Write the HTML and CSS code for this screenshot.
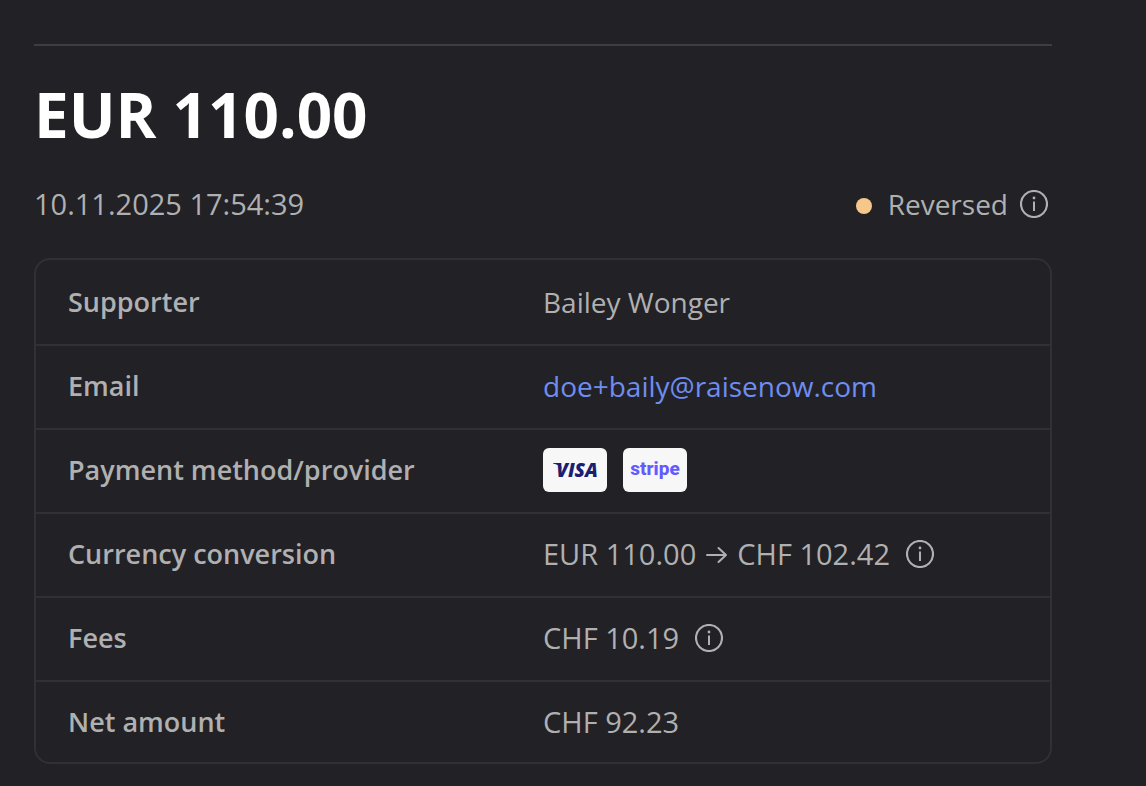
FILE: index.html
```html
<!DOCTYPE html>
<html lang="en">
<head>
<meta charset="utf-8">
<meta name="viewport" content="width=device-width, initial-scale=1">
<title>Payment details</title>
<link rel="stylesheet" href="styles.css">
</head>
<body>
<svg class="defs" aria-hidden="true">
  <symbol id="info" viewBox="0 0 28 28">
    <circle cx="14" cy="14" r="13" fill="none" stroke="currentColor" stroke-width="2.200"/>
    <path d="M14 11.500V21" fill="none" stroke="currentColor" stroke-width="2"/>
    <circle cx="14" cy="8" r="1.400" fill="currentColor"/>
  </symbol>
</svg>
<main class="payment">
  <h1 class="amount">EUR 110.00</h1>
  <div class="meta">
    <time class="date figures" datetime="2025-11-10T17:54:39">10.11.2025 17:54:39</time>
    <div class="status">
      <span class="dot"></span>
      <span>Reversed</span>
      <button class="info" type="button" aria-label="Status information"><svg><use href="#info"/></svg></button>
    </div>
  </div>
  <div class="card">
    <table class="details">
      <tbody>
        <tr><th scope="row">Supporter</th><td>Bailey Wonger</td></tr>
        <tr><th scope="row">Email</th><td><a class="link email" href="mailto:doe+baily@raisenow.com">doe+baily@raisenow.com</a></td></tr>
        <tr><th scope="row">Payment method/provider</th><td><div class="badges"><span class="badge visa"><svg class="badge-art" viewBox="0 0 64 44"><path class="visa-tick" d="M10 15h7l2 6c-2-3-5-5-9-5.500z"/><text class="visa-text" x="34" y="29" text-anchor="middle">VISA</text></svg></span><span class="badge stripe">stripe</span></div></td></tr>
        <tr><th scope="row">Currency conversion</th><td><div class="value figures"><span class="conversion">EUR 110.00 <svg class="arrow" viewBox="0 0 22 20" role="img" aria-label="to"><path d="M1 10h19M12.500 3l7.500 7-7.500 7"/></svg> CHF 102.42</span><button class="info" type="button" aria-label="Conversion information"><svg><use href="#info"/></svg></button></div></td></tr>
        <tr><th scope="row">Fees</th><td><div class="value figures"><span>CHF 10.19</span><button class="info" type="button" aria-label="Fee information"><svg><use href="#info"/></svg></button></div></td></tr>
        <tr><th scope="row">Net amount</th><td class="figures">CHF 92.23</td></tr>
      </tbody>
    </table>
  </div>
</main>
</body>
</html>
```
FILE: styles.css
```css
* { box-sizing: border-box; }
body {
  margin: 0;
  padding: 44px 94px 22px 34px;
  background: #222126;
  color: #b0b0b1;
  font-family: "Open Sans", "Noto Sans", sans-serif;
  font-size: 28px;
  line-height: 40px;
}
.defs { display: none; }
.payment { border-top: 2px solid #3e3d42; }
.amount {
  margin: 0;
  padding: 28px 0 0;
  color: #fff;
  font-size: 62px;
  font-weight: 700;
  line-height: 80px;
}
.figures { font-size: 29px; }
.meta {
  display: flex;
  justify-content: space-between;
  align-items: center;
  margin: 30px 0 34px;
}
.status {
  display: flex;
  align-items: center;
  padding-right: 4px;
}
.dot {
  width: 16px;
  height: 16px;
  margin: 4px 16px 0 0;
  border-radius: 50%;
  background: #f6c78a;
}
.info {
  display: block;
  flex: none;
  width: 28px;
  height: 28px;
  padding: 0;
  border: 0;
  background: none;
  color: inherit;
  cursor: pointer;
}
.status .info { margin-left: 12px; }
.info svg {
  display: block;
  width: 28px;
  height: 28px;
}
.card {
  border: 2px solid #303035;
  border-radius: 16px;
}
.details {
  width: 100%;
  border-spacing: 0;
  table-layout: fixed;
}
.details th, .details td {
  width: 50%;
  height: 84px;
  padding: 0;
  text-align: left;
  vertical-align: middle;
}
.details th {
  padding-left: 32px;
  font-size: 27px;
  font-weight: 600;
}
.details tr + tr > * {
  padding-bottom: 2px;
  border-top: 2px solid #303035;
}
.details tr:last-child > * {
  height: 82px;
  padding-bottom: 0;
}
.link {
  color: #6e8df0;
  text-decoration: none;
}
.value {
  display: flex;
  align-items: center;
  gap: 16px;
}
.arrow {
  width: 22px;
  height: 20px;
  margin: 0 2px;
  fill: none;
  stroke: currentColor;
  stroke-width: 2;
  stroke-linecap: round;
  stroke-linejoin: round;
}
.badges {
  display: flex;
  gap: 16px;
}
.badge {
  display: flex;
  justify-content: center;
  width: 64px;
  height: 44px;
  border-radius: 6px;
  background: #f7f7f7;
}
.badge-art {
  width: 64px;
  height: 44px;
}
.visa-text {
  font-size: 19px;
  font-style: italic;
  font-weight: 800;
}
.visa-text, .visa-tick { fill: #1a1f71; }
.stripe {
  color: #635bff;
  font-family: Roboto, "Open Sans", sans-serif;
  font-size: 19px;
  font-weight: 800;
  line-height: 42px;
}
```
